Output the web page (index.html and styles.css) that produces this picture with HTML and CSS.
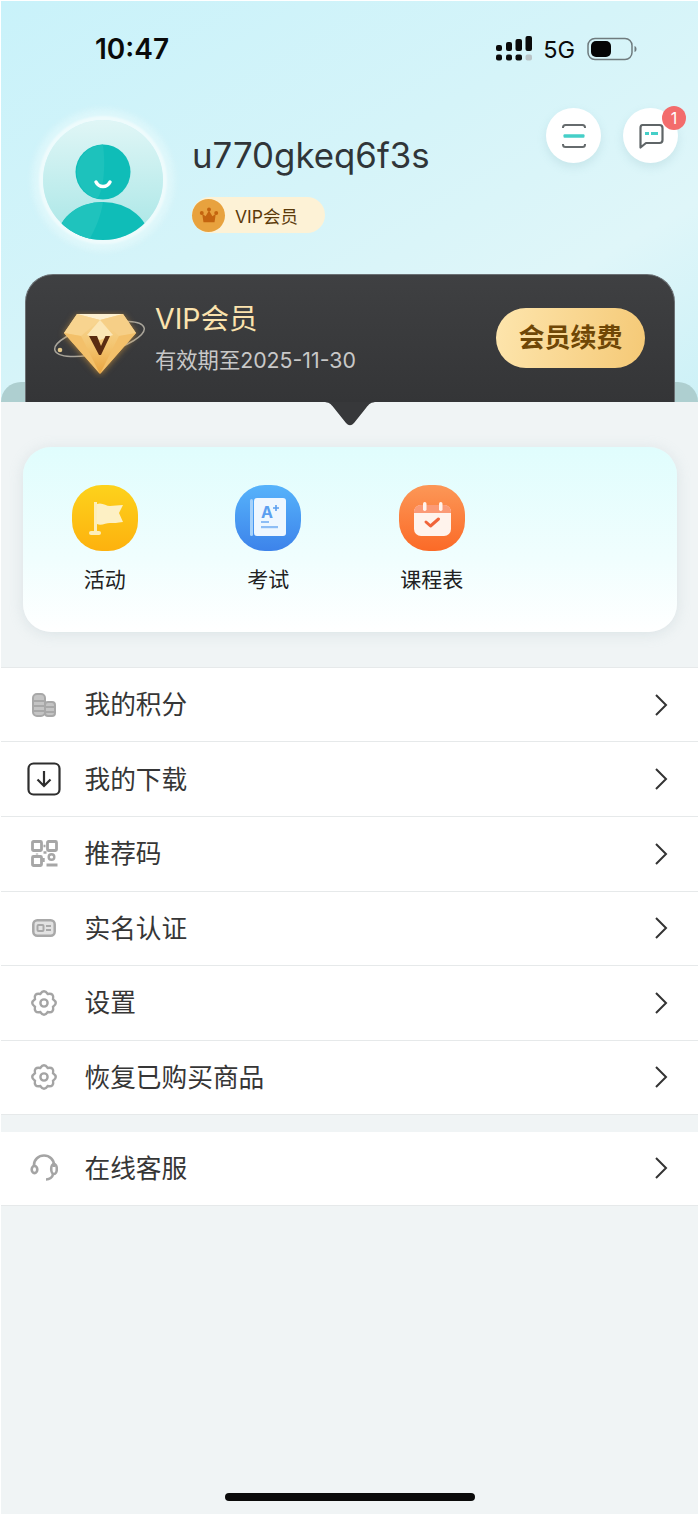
FILE: index.html
```html
<!DOCTYPE html>
<html lang="zh">
<head>
<meta charset="utf-8">
<title>我的</title>
<link rel="stylesheet" href="styles.css">
</head>
<body>
<div class="screen">
  <header class="hero">
    <div class="status">
      <span class="time">10:47</span>
      <div class="status-right">
        <svg class="signal" width="36" height="26" viewBox="0 0 36 26">
          <g fill="#0b0b0b">
            <rect x="0" y="9" width="6" height="6" rx="2"/><rect x="0" y="18.500" width="6" height="6" rx="2"/>
            <rect x="10" y="6" width="6" height="9" rx="2"/><rect x="10" y="18.500" width="6" height="6" rx="2"/>
            <rect x="19.500" y="3" width="6.500" height="12" rx="2"/><rect x="19.500" y="18.500" width="6.500" height="6" rx="2"/>
            <rect x="29.500" y="0" width="6.500" height="15" rx="2"/>
          </g>
          <rect x="29.500" y="18.500" width="6.500" height="6" rx="2" fill="#b9c3c6"/>
        </svg>
        <span class="net">5G</span>
        <svg class="battery" width="50" height="24" viewBox="0 0 50 24">
          <rect x="1" y="1.500" width="44" height="21" rx="7" fill="none" stroke="#6f7b7e" stroke-width="1.500"/>
          <rect x="4" y="4" width="20" height="16" rx="5" fill="#050505"/>
          <path d="M47.500 9c1.500.5 2 1.500 2 3s-.5 2.500-2 3z" fill="#6f7b7e"/>
        </svg>
      </div>
    </div>
    <div class="profile">
      <div class="avatar">
        <svg width="120" height="120" viewBox="0 0 120 120">
          <defs>
            <linearGradient id="avbg" x1="0" y1="0" x2="0" y2="1">
              <stop offset="0" stop-color="#e0f6f6"/><stop offset="1" stop-color="#a8e6e6"/>
            </linearGradient>
            <clipPath id="avclip"><circle cx="60" cy="60" r="60"/></clipPath>
          </defs>
          <circle cx="60" cy="60" r="60" fill="url(#avbg)"/>
          <g clip-path="url(#avclip)">
            <ellipse cx="60" cy="122" rx="47" ry="40" fill="#0fbdb8"/>
            <path d="M60 82C35 82 16 96 13 122h32c7-12 13-26 15-40z" fill="#1fc3bd"/>
          </g>
          <circle cx="60" cy="52" r="27.500" fill="#0fbdb8"/>
          <path d="M60 24.500a27.500 27.500 0 0 0-6 54c6-6 9-30 6-54z" fill="#1dc2bc"/>
          <path d="M53 62c3 6 11 6 14 0" fill="none" stroke="#fff" stroke-width="3.500" stroke-linecap="round"/>
        </svg>
      </div>
      <div class="identity">
        <div class="username">u770gkeq6f3s</div>
        <div class="chip">
          <span class="chip-icon">
            <svg width="20" height="17" viewBox="0 0 22 20">
              <path d="M3 8l4 3 4-7 4 7 4-3-1.500 10h-13z" fill="#c4640f"/>
              <circle cx="2.500" cy="7" r="2.300" fill="#c4640f"/><circle cx="11" cy="3" r="2.300" fill="#c4640f"/><circle cx="19.500" cy="7" r="2.300" fill="#c4640f"/>
            </svg>
          </span>
          <span class="chip-text">VIP会员</span>
        </div>
      </div>
      <div class="actions">
        <div class="round-btn">
          <svg width="26" height="26" viewBox="0 0 26 26" fill="none">
            <path d="M2 5V4.500C2 3 3 2 4.500 2h17C23 2 24 3 24 4.500V5M2 21v.5C2 23 3 24 4.500 24h17c1.500 0 2.500-1 2.500-2.500V21" stroke="#666b6d" stroke-width="2"/>
            <rect x="2.500" y="11.300" width="21" height="3.500" rx="1" fill="#45cfc8"/>
          </svg>
        </div>
        <div class="round-btn">
          <svg width="26" height="26" viewBox="0 0 26 26" fill="none">
            <path d="M4.500 2h17C23.500 2 24.500 3 24.500 5v12c0 2-1 3-3 3H8l-5.500 4.500V5c0-2 .5-3 2-3z" stroke="#5f6567" stroke-width="2.200" stroke-linejoin="round"/>
            <path d="M7 10.500h4M13 10.500h7" stroke="#45cfc8" stroke-width="2.800"/>
          </svg>
          <span class="badge">1</span>
        </div>
      </div>
    </div>
    <div class="sheet-edge"></div>
    <div class="vip-card">
      <svg class="diamond" width="94" height="68" viewBox="0 0 94 68">
        <defs>
          <linearGradient id="dia" x1="0" y1="0" x2="0" y2="1">
            <stop offset="0" stop-color="#f8d998"/><stop offset=".55" stop-color="#f3c46f"/><stop offset="1" stop-color="#eaa43f"/>
          </linearGradient>
        </defs>
        <ellipse cx="46.500" cy="29" rx="46" ry="14" transform="rotate(-14 46.500 29)" fill="none" stroke="#a9a59b" stroke-width="1.500"/>
        <g class="gem">
          <path d="M24 4h46l13 19-36 41L11 23z" fill="url(#dia)"/>
          <path d="M24 4h46l-23 6z" fill="#fdf0d0"/>
          <path d="M24 4l-13 19 17 3 19-16z" fill="#f8d48f"/>
          <path d="M70 4l13 19-17 3-19-16z" fill="#f6cf87"/>
          <path d="M47 10L34 25l13 5 13-5z" fill="#fbe6b6"/>
          <path d="M11 23l36 41-19-38z" fill="#f3c06a"/>
          <path d="M83 23L47 64l19-38z" fill="#f3c06a"/>
          <path d="M36 26h8l4 10 4.500-10h4.500L48 45h-2z" fill="#5a2c12"/>
        </g>
        <circle cx="7" cy="40" r="2.300" fill="#e4c98c"/>
      </svg>
      <div class="vip-text">
        <div class="vip-title">VIP会员</div>
        <div class="vip-date">有效期至2025-11-30</div>
      </div>
      <div class="renew">会员续费</div>
    </div>
    <div class="pointer"></div>
  </header>

  <main class="panel">
    <section class="shortcuts">
      <div class="shortcut">
        <span class="tile tile-yellow">
          <svg width="66" height="66" viewBox="0 0 66 66">
            <rect x="22" y="17" width="3" height="30" fill="#fdeeb9"/>
            <rect x="17" y="46" width="12" height="4" rx="2" fill="#fdeeb9"/>
            <path d="M25 19c5-2 9 2 13 2s8-1 13-1l-4 8 4 9c-6 1-9 1-13 1s-9 3-13 1z" fill="#fdf0c4"/>
          </svg>
        </span>
        <span class="label">活动</span>
      </div>
      <div class="shortcut">
        <span class="tile tile-blue">
          <svg width="66" height="66" viewBox="0 0 66 66">
            <rect x="15" y="14" width="3" height="37" rx="1.500" fill="#a6d2fb"/>
            <rect x="19" y="13" width="32" height="38" rx="3" fill="#eef7ff"/>
            <text class="grade" x="26" y="33">A</text>
            <path d="M38 23h6M41 20v6" stroke="#5b9ff0" stroke-width="1.600"/>
            <rect x="26" y="36" width="8" height="2" fill="#8dbdf5"/>
            <rect x="26" y="41" width="17" height="2.200" fill="#8dbdf5"/>
          </svg>
        </span>
        <span class="label">考试</span>
      </div>
      <div class="shortcut">
        <span class="tile tile-orange">
          <svg width="66" height="66" viewBox="0 0 66 66">
            <rect x="15" y="20" width="37" height="31" rx="7" fill="#fff3ec"/>
            <path d="M15 28v-1c0-4 3-7 7-7h23c4 0 7 3 7 7v1z" fill="#fb9a76"/>
            <rect x="24" y="17" width="3.500" height="9" rx="1.700" fill="#fff3ec"/>
            <rect x="40" y="17" width="3.500" height="9" rx="1.700" fill="#fff3ec"/>
            <path d="M27 37l4.500 4 8-7" fill="none" stroke="#f0643a" stroke-width="3" stroke-linecap="round" stroke-linejoin="round"/>
          </svg>
        </span>
        <span class="label">课程表</span>
      </div>
    </section>

    <section class="menu">
      <div class="row">
        <span class="row-icon">
          <svg width="26" height="26" viewBox="0 0 26 26" fill="none" stroke="#a8a8a8" stroke-width="2">
            <rect x="2" y="2" width="12" height="22" rx="4" fill="#c4c4c4"/>
            <rect x="14" y="10" width="10" height="14" rx="3" fill="#c4c4c4"/>
            <path d="M2 9h12M2 14h12M2 19h12M14 15h10M14 20h10"/>
          </svg>
        </span>
        <span class="row-label">我的积分</span>
        <svg class="chev" width="14" height="24" viewBox="0 0 14 24"><path d="M2 2l10 10L2 22" fill="none" stroke="#333" stroke-width="2"/></svg>
      </div>
      <div class="row">
        <span class="row-icon row-icon-sharp">
          <svg width="34" height="34" viewBox="0 0 34 34" fill="none" stroke="#2e2e2e" stroke-width="2.200">
            <rect x="1.500" y="1.500" width="31" height="31" rx="5"/>
            <path d="M17 9v15M10.500 17.500L17 24l6.500-6.500"/>
          </svg>
        </span>
        <span class="row-label">我的下载</span>
        <svg class="chev" width="14" height="24" viewBox="0 0 14 24"><path d="M2 2l10 10L2 22" fill="none" stroke="#333" stroke-width="2"/></svg>
      </div>
      <div class="row">
        <span class="row-icon">
          <svg width="27" height="27" viewBox="0 0 27 27" fill="none" stroke="#a6a6a6" stroke-width="2.800">
            <rect x="1.500" y="1.500" width="9" height="9" rx="1"/>
            <rect x="16.500" y="1.500" width="9" height="9" rx="1"/>
            <rect x="1.500" y="16.500" width="9" height="9" rx="1"/>
            <path d="M12.500 6h2M12.500 12.500h3M6 13.500v1M12.500 18v4" stroke-width="2.400"/>
            <circle cx="20.500" cy="17" r="2.800" stroke-width="2.400"/>
            <path d="M15.500 25h11" stroke-width="3"/>
          </svg>
        </span>
        <span class="row-label">推荐码</span>
        <svg class="chev" width="14" height="24" viewBox="0 0 14 24"><path d="M2 2l10 10L2 22" fill="none" stroke="#333" stroke-width="2"/></svg>
      </div>
      <div class="row">
        <span class="row-icon">
          <svg width="24" height="18" viewBox="0 0 24 18" fill="#e2e2e2" stroke="#a8a8a8" stroke-width="2.500">
            <rect x="1.300" y="1.300" width="21.400" height="15.400" rx="4"/>
            <rect x="5.500" y="6" width="6" height="6" rx="1" fill="none" stroke-width="2"/>
            <path d="M14 7h5M14 11h5" stroke-width="2"/>
          </svg>
        </span>
        <span class="row-label">实名认证</span>
        <svg class="chev" width="14" height="24" viewBox="0 0 14 24"><path d="M2 2l10 10L2 22" fill="none" stroke="#333" stroke-width="2"/></svg>
      </div>
      <div class="row">
        <span class="row-icon">
          <svg width="26" height="26" viewBox="0 0 26 26" fill="none" stroke="#a4a4a4" stroke-width="2.400">
            <path d="M22.050 9.250Q27.500 13 22.050 16.750Q23.250 23.250 16.750 22.050Q13 27.500 9.250 22.050Q2.750 23.250 3.950 16.750Q-1.500 13 3.950 9.250Q2.750 2.750 9.250 3.950Q13 -1.500 16.750 3.950Q23.250 2.750 22.050 9.250Z"/>
            <circle cx="13" cy="13" r="3.600"/>
          </svg>
        </span>
        <span class="row-label">设置</span>
        <svg class="chev" width="14" height="24" viewBox="0 0 14 24"><path d="M2 2l10 10L2 22" fill="none" stroke="#333" stroke-width="2"/></svg>
      </div>
      <div class="row">
        <span class="row-icon">
          <svg width="26" height="26" viewBox="0 0 26 26" fill="none" stroke="#a4a4a4" stroke-width="2.400">
            <path d="M22.050 9.250Q27.500 13 22.050 16.750Q23.250 23.250 16.750 22.050Q13 27.500 9.250 22.050Q2.750 23.250 3.950 16.750Q-1.500 13 3.950 9.250Q2.750 2.750 9.250 3.950Q13 -1.500 16.750 3.950Q23.250 2.750 22.050 9.250Z"/>
            <circle cx="13" cy="13" r="3.600"/>
          </svg>
        </span>
        <span class="row-label">恢复已购买商品</span>
        <svg class="chev" width="14" height="24" viewBox="0 0 14 24"><path d="M2 2l10 10L2 22" fill="none" stroke="#333" stroke-width="2"/></svg>
      </div>
    </section>

    <section class="menu menu-second">
      <div class="row">
        <span class="row-icon">
          <svg width="28" height="28" viewBox="0 0 28 28" fill="none" stroke="#a4a4a4" stroke-width="2.600">
            <path d="M4 13V11a10 9.500 0 0 1 20 0v2"/>
            <ellipse cx="4.500" cy="15.500" rx="2.800" ry="3.600"/>
            <ellipse cx="24" cy="15" rx="2.800" ry="5"/>
            <path d="M23 20c-.5 3.500-3.500 5.500-7 5.500"/>
          </svg>
        </span>
        <span class="row-label">在线客服</span>
        <svg class="chev" width="14" height="24" viewBox="0 0 14 24"><path d="M2 2l10 10L2 22" fill="none" stroke="#333" stroke-width="2"/></svg>
      </div>
    </section>
  </main>
  <div class="home-bar"></div>
</div>
</body>
</html>
```

FILE: styles.css
```css
* { box-sizing: border-box; }
html, body { margin: 0; padding: 0; background: #fff; }
body {
  width: 700px;
  height: 1514px;
  overflow: hidden;
  font-family: "Inter", "Noto Sans CJK SC", sans-serif;
}
.screen {
  position: relative;
  width: 697px;
  height: 1513px;
  margin: 1px 2px 0 1px;
  display: flex;
  flex-direction: column;
  background: #f0f4f5;
}
.hero {
  position: relative;
  height: 401px;
  padding: 0 23px 0 24px;
  background: linear-gradient(150deg, #c9f2fa 0%, #d5f4f9 45%, #dff6f9 75%, #cdf1f7 100%);
}
.status {
  height: 107px;
  padding: 34px 38px 0 70px;
  display: flex;
  justify-content: space-between;
  align-items: flex-start;
}
.time {
  font-size: 28px;
  font-weight: 600;
  line-height: 28px;
  color: #0a0a0a;
}
.status-right {
  display: flex;
  align-items: center;
  gap: 12px;
  height: 28px;
}
.net {
  margin-left: -1px;
  font-family: "Inter", sans-serif;
  font-size: 23.500px;
  color: #0a0a0a;
}
.profile {
  display: flex;
  height: 166px;
  padding-left: 18px;
}
.avatar {
  width: 120px;
  height: 120px;
  margin-top: 12px;
  border-radius: 50%;
  box-shadow: 0 0 2px 4px #eefbfc, 0 0 6px 11px rgba(240, 252, 253, .45);
}
.avatar svg { display: block; }
.identity {
  margin-left: 29px;
  padding-top: 26px;
  flex: 1;
}
.username {
  font-family: "Inter", sans-serif;
  font-size: 34.800px;
  line-height: 42px;
  color: #303538;
}
.chip {
  display: flex;
  align-items: center;
  width: 133px;
  height: 36px;
  margin-top: 21px;
  border-radius: 18px;
  background: #fdf2d6;
}
.chip-icon {
  width: 33px;
  height: 33px;
  border-radius: 50%;
  background: #e8a23e;
  display: flex;
  align-items: center;
  justify-content: center;
}
.chip-text {
  margin-left: 10px;
  font-size: 17.500px;
  color: #5b3a0a;
}
.actions { display: flex; gap: 22px; margin-right: -3px; }
.round-btn {
  position: relative;
  width: 55px;
  height: 55px;
  border-radius: 50%;
  background: #fff;
  box-shadow: 0 4px 10px rgba(120, 170, 180, .2);
  display: flex;
  align-items: center;
  justify-content: center;
}
.badge {
  position: absolute;
  top: -2px;
  right: -8px;
  width: 24px;
  height: 24px;
  border-radius: 50%;
  background: #f36c6c;
  color: #fff;
  font-size: 16px;
  line-height: 24px;
  text-align: center;
}
.sheet-edge {
  position: absolute;
  left: 0;
  right: 0;
  bottom: 0;
  height: 20px;
  border-radius: 24px 24px 0 0;
  background: #aecfd0;
}
.vip-card {
  position: relative;
  height: 128px;
  padding: 28px 29px 0 27px;
  display: flex;
  align-items: flex-start;
  border-radius: 28px 28px 0 0;
  border: 1px solid #6b7074;
  border-bottom: 0;
  background: linear-gradient(180deg, #3f4042 0%, #343537 100%);
}
.diamond { margin-top: 7px; }
.gem { filter: drop-shadow(0 1px 3px rgba(240, 170, 60, .55)); }
.vip-text { margin-left: 8px; }
.vip-title {
  font-size: 28.500px;
  line-height: 32px;
  color: #fbe3ae;
}
.vip-date {
  margin-top: 11px;
  font-size: 21.300px;
  line-height: 28px;
  color: #c8c8c8;
}
.renew {
  margin-left: auto;
  margin-top: 5px;
  width: 149px;
  height: 60px;
  border-radius: 30px;
  background: linear-gradient(100deg, #fde5ad 0%, #f5c976 100%);
  color: #6f4706;
  font-size: 26px;
  font-weight: 700;
  line-height: 60px;
  text-align: center;
}
.pointer {
  position: absolute;
  left: 322px;
  bottom: -24px;
  width: 54px;
  height: 24px;
  background: #37383a;
  clip-path: path("M0 0C6 0 8 2 11 6L23 21Q27 25.500 31 21L43 6C46 2 48 0 54 0Z");
}
.panel { flex: 1; padding-top: 45px; }
.shortcuts {
  margin: 0 21px 34.900px 22px;
  height: 185px;
  padding-top: 38px;
  display: grid;
  grid-template-columns: repeat(4, 1fr);
  align-items: start;
  border-radius: 28px;
  background: linear-gradient(180deg, #e0fdfd 0%, #f0fefe 60%, #fff 100%);
  box-shadow: 0 2px 14px rgba(170, 190, 195, .3);
}
.shortcut {
  display: flex;
  flex-direction: column;
  align-items: center;
}
.tile {
  width: 66px;
  height: 66px;
  border-radius: 30px;
  display: flex;
  align-items: center;
  justify-content: center;
}
.grade {
  font-family: "Inter", sans-serif;
  font-size: 16px;
  font-weight: 700;
  fill: #5b9ff0;
}
.tile-yellow { background: linear-gradient(180deg, #fdd21c, #fdb10e); }
.tile-blue { background: linear-gradient(180deg, #56b3fb, #3d83ea); }
.tile-orange { background: linear-gradient(180deg, #fc9757, #fb6a27); }
.label {
  margin-top: 14px;
  font-size: 21px;
  line-height: 29px;
  color: #222;
}
.menu { background: #fff; border-top: 1px solid #e6e9ea; }
.menu-second { margin-top: 16.500px; border-top: 0; }
.row {
  height: 74.550px;
  padding: 0 30px 0 26px;
  display: flex;
  align-items: center;
  border-bottom: 1px solid #e6e9ea;
}
.row-icon {
  width: 34px;
  height: 34px;
  display: flex;
  align-items: center;
  justify-content: center;
  filter: blur(.5px);
}
.row-icon-sharp { filter: none; }
.row-label {
  margin-left: 23.500px;
  margin-bottom: 4px;
  flex: 1;
  font-size: 25.700px;
  color: #363636;
}
.home-bar {
  position: absolute;
  left: 224px;
  bottom: 13px;
  width: 250px;
  height: 8px;
  border-radius: 4px;
  background: #0a0a0a;
}
```
